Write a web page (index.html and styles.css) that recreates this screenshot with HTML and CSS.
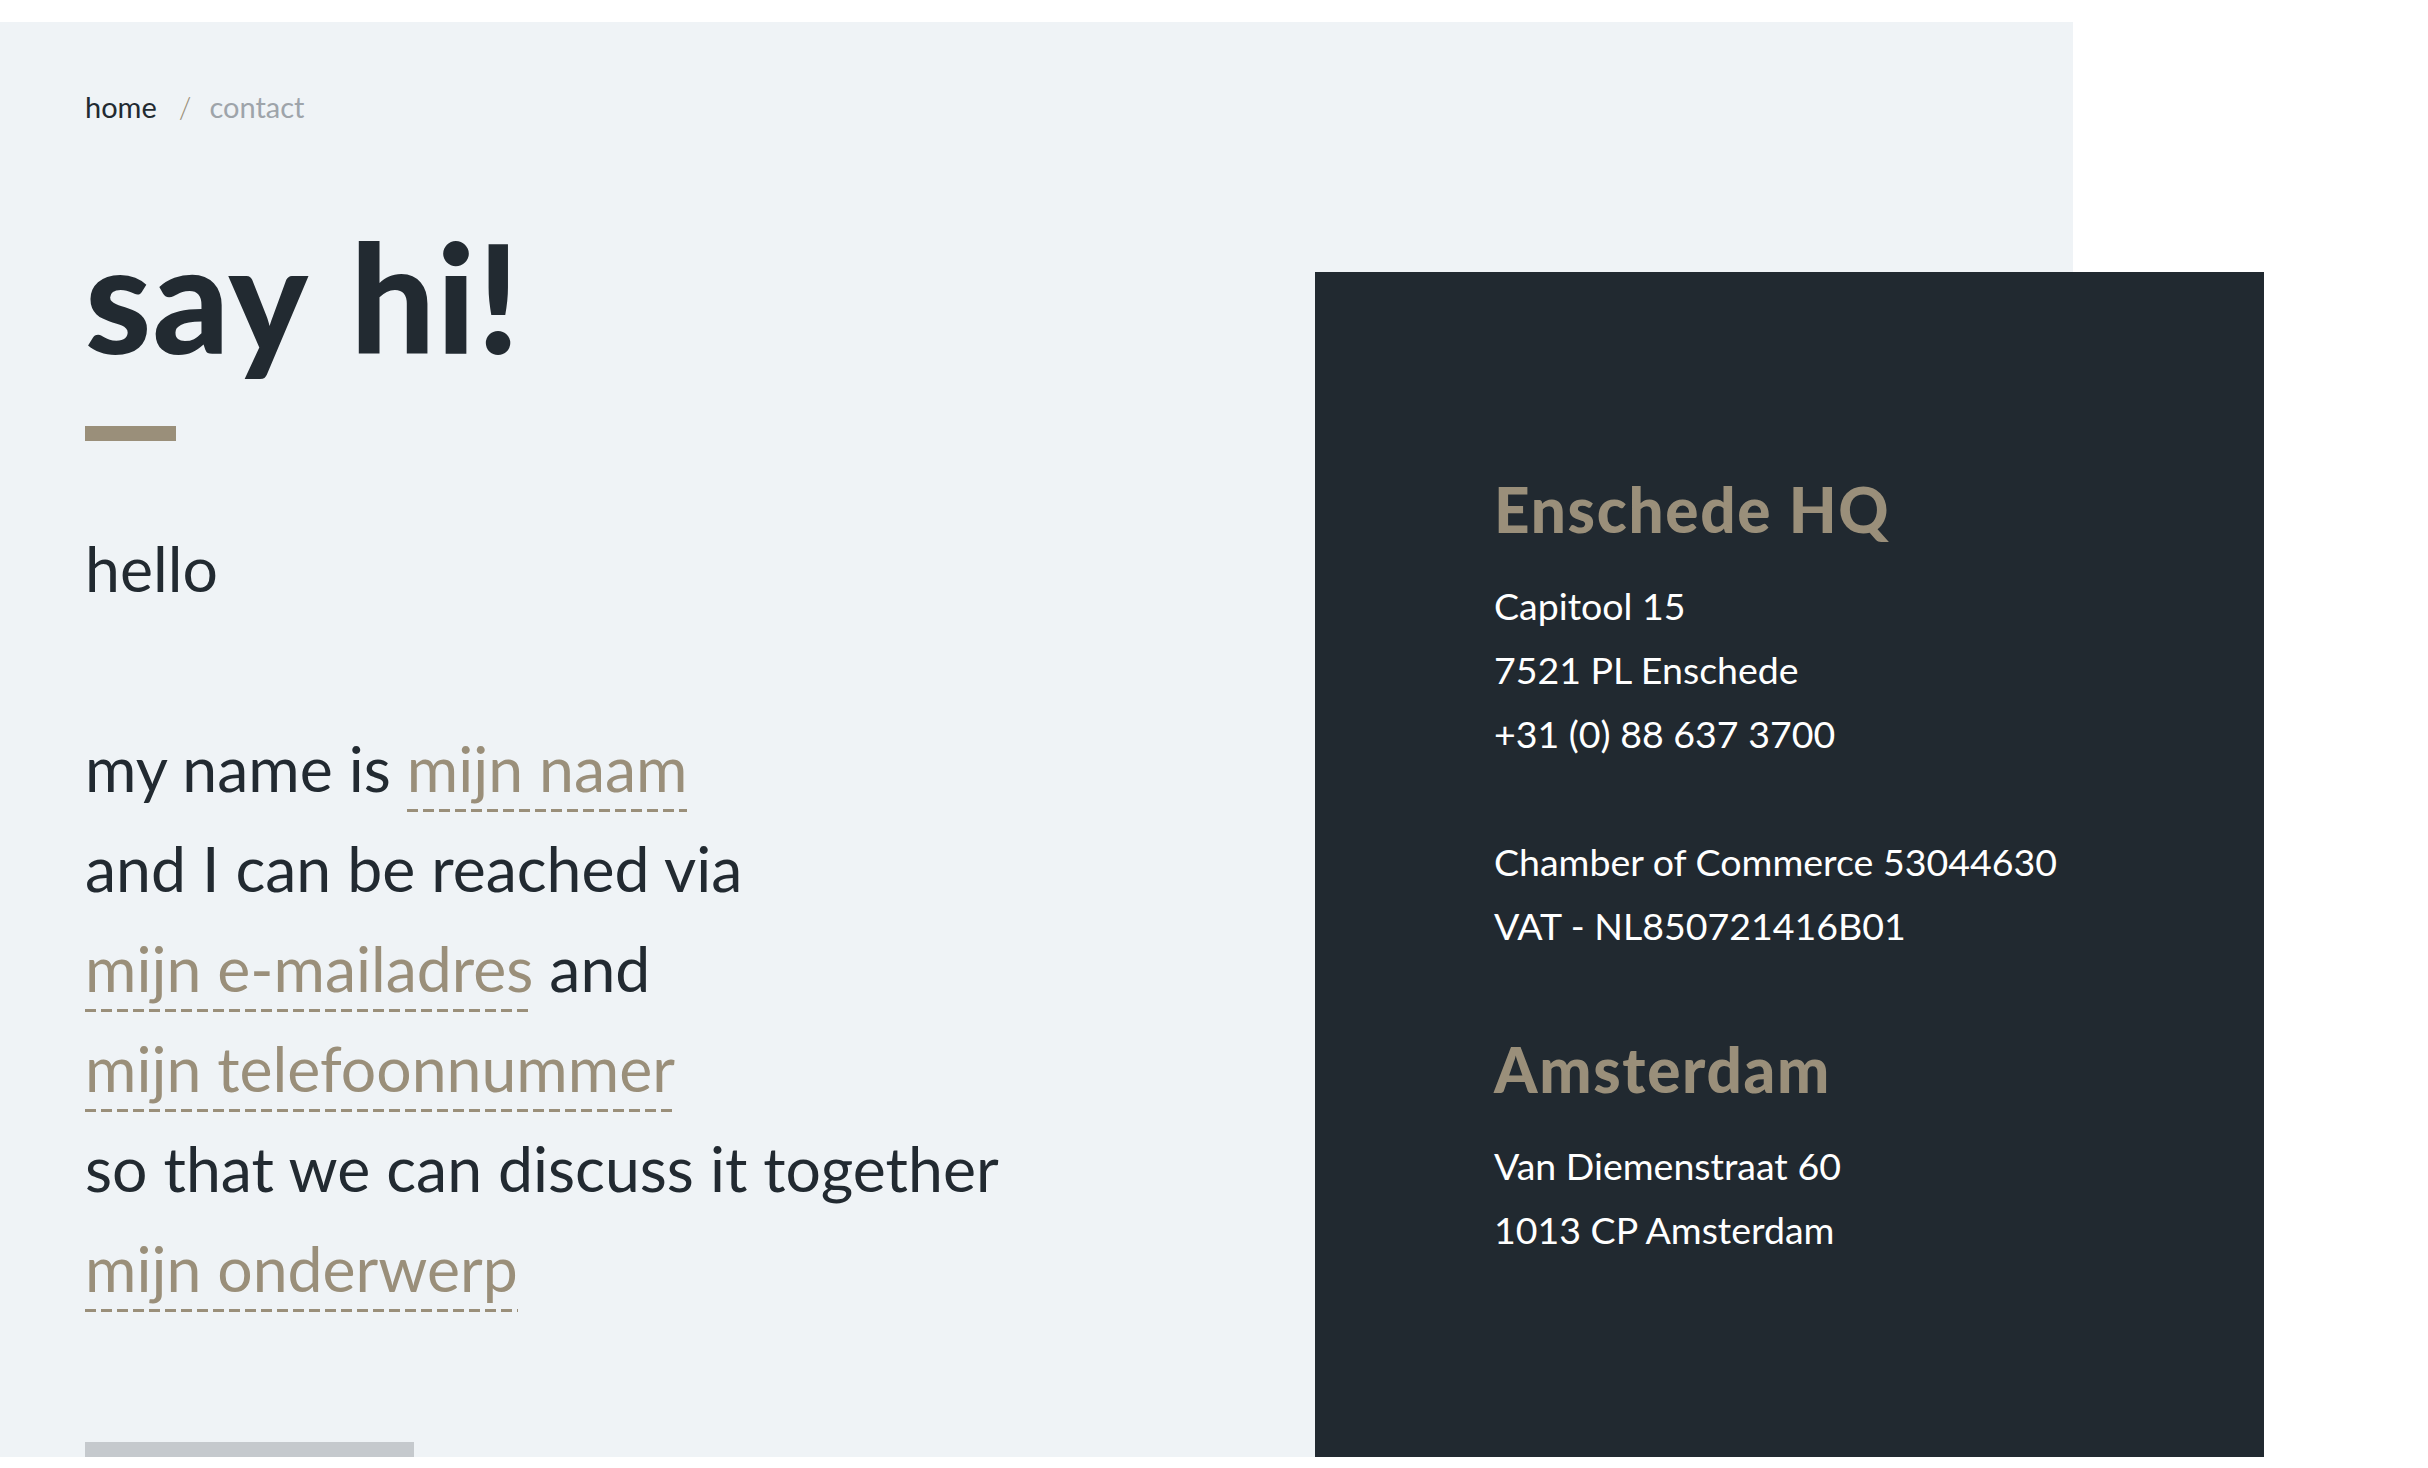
FILE: index.html
```html
<!DOCTYPE html>
<html lang="en">
<head>
<meta charset="utf-8">
<title>say hi!</title>
<link rel="stylesheet" href="styles.css">
</head>
<body>
<div class="page">
  <main class="intro">
    <nav class="crumbs">
      <a class="crumb" href="#">home</a>
      <span class="sep">/</span>
      <span class="crumb current">contact</span>
    </nav>
    <h1 class="title">say hi!</h1>
    <div class="rule"></div>
    <div class="madlib">
      <div class="line">hello</div>
      <div class="line">&nbsp;</div>
      <div class="line">my name is <span class="field">mijn naam</span></div>
      <div class="line">and I can be reached via</div>
      <div class="line"><span class="field">mijn e-mailadres</span> and</div>
      <div class="line"><span class="field">mijn telefoonnummer</span></div>
      <div class="line">so that we can discuss it together</div>
      <div class="line"><span class="field">mijn onderwerp</span></div>
    </div>
    <div class="send"></div>
  </main>
  <aside class="card">
    <h2 class="office">Enschede HQ</h2>
    <div class="info">
      <div>Capitool 15</div>
      <div>7521 PL Enschede</div>
      <div>+31 (0) 88 637 3700</div>
      <div>&nbsp;</div>
      <div>Chamber of Commerce 53044630</div>
      <div>VAT - NL850721416B01</div>
    </div>
    <h2 class="office second">Amsterdam</h2>
    <div class="info">
      <div>Van Diemenstraat 60</div>
      <div>1013 CP Amsterdam</div>
    </div>
  </aside>
</div>
</body>
</html>
```
FILE: styles.css
```css
html, body {
  margin: 0;
  padding: 0;
  background: #ffffff;
  overflow: hidden;
}
body {
  font-family: Lato, "Open Sans", sans-serif;
  color: #222a31;
  height: 1468px;
}
.page {
  margin-top: 22px;
  height: 1435px;
  overflow: hidden;
  display: flex;
  background: linear-gradient(#eff3f6, #eff3f6) no-repeat left top / 2073px 100%;
}
.intro {
  width: 1315px;
  box-sizing: border-box;
  padding: 65px 0 0 85px;
}
.crumbs {
  font-size: 29px;
  line-height: 40px;
  display: flex;
  align-items: center;
}
.crumb {
  color: #222a31;
  text-decoration: none;
}
.crumb.current {
  color: #9ea4aa;
}
.sep {
  color: #9a8f7a;
  margin: 0 18px 0 22px;
  font-weight: 300;
}
.title {
  margin: 94px 0 0 0;
  font-size: 150px;
  line-height: 1;
  font-weight: 900;
  letter-spacing: 1.2px;
  word-spacing: 8px;
  color: #222a31;
}
.rule {
  margin-top: 55px;
  width: 91px;
  height: 15px;
  background: #9a8f7a;
}
.madlib {
  margin-top: 77px;
  font-size: 62.5px;
  line-height: 100px;
  white-space: nowrap;
}
.field {
  color: #9a8f7a;
  padding-bottom: 7px;
  background: repeating-linear-gradient(90deg, #9a8f7a 0 11px, transparent 11px 16px) left bottom / 100% 3px no-repeat;
}
.send {
  margin-top: 124px;
  width: 329px;
  height: 80px;
  background: #c5c9cd;
}
.card {
  margin-top: 250px;
  width: 949px;
  box-sizing: border-box;
  padding: 200px 0 0 179px;
  background: #212930;
  color: #ffffff;
}
.office {
  margin: 0;
  font-size: 62px;
  line-height: 74px;
  font-weight: 900;
  letter-spacing: 1.7px;
  color: #9a8f7a;
}
.office.second {
  margin-top: 74px;
}
.info {
  margin-top: 28px;
  font-size: 37.5px;
  line-height: 64px;
}
```
